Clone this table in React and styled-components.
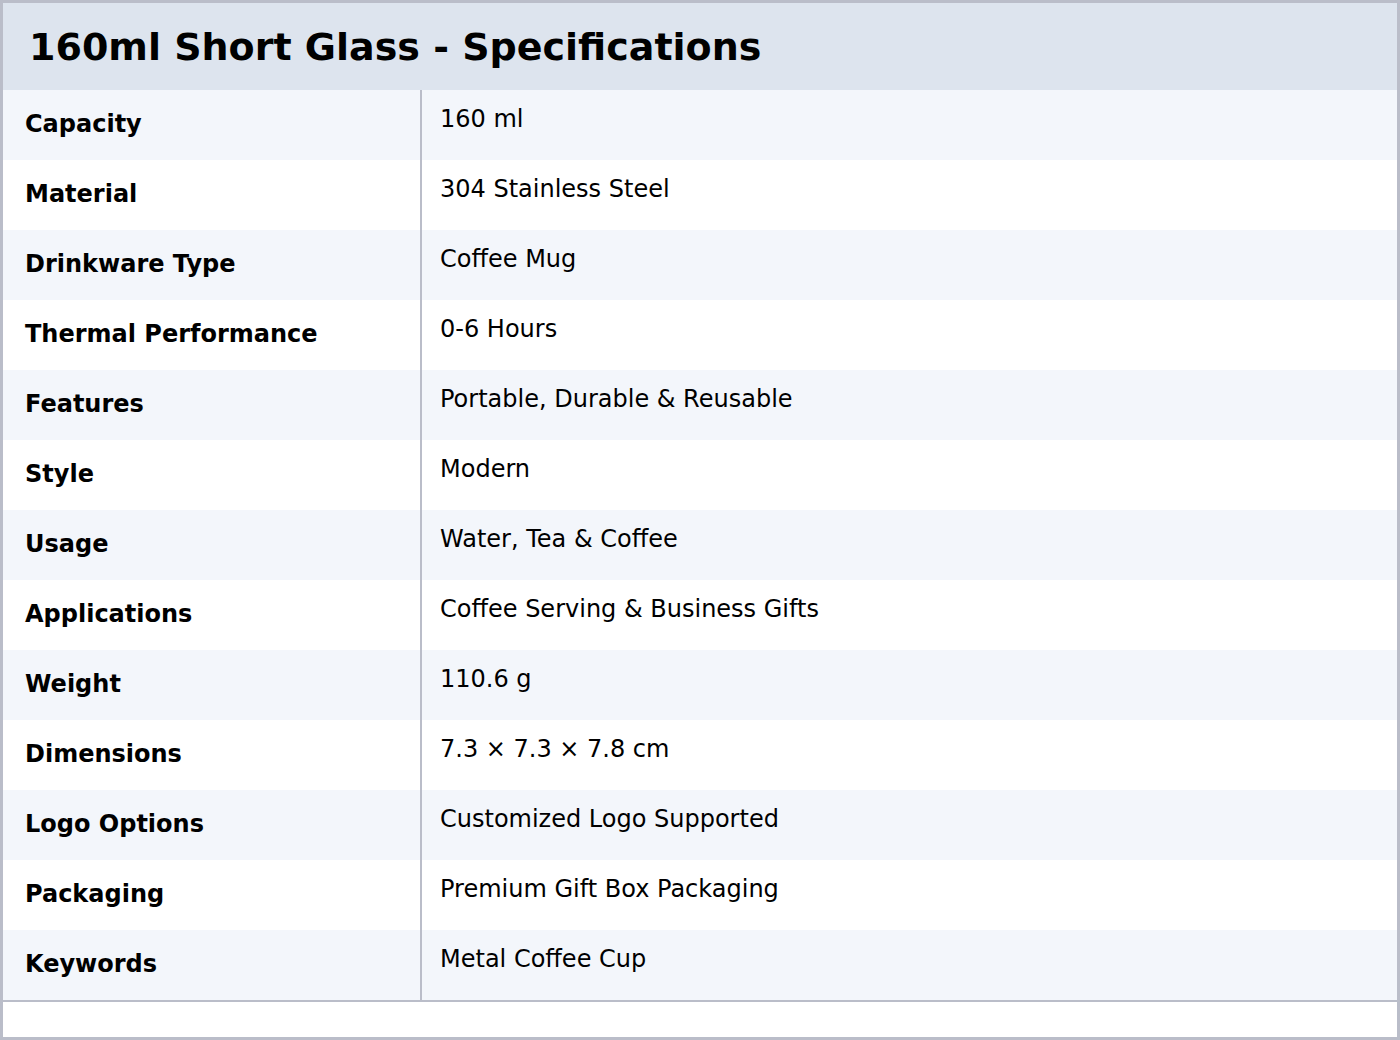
import React from "react";
import styled, { createGlobalStyle } from "styled-components";

const GlobalStyle = createGlobalStyle`
  html, body {
    margin: 0;
    padding: 0;
    background: #fff;
    font-family: "DejaVu Sans", "Liberation Sans", sans-serif;
  }
  * {
    box-sizing: border-box;
  }
`;

const specs = [
  ["Capacity", "160 ml"],
  ["Material", "304 Stainless Steel"],
  ["Drinkware Type", "Coffee Mug"],
  ["Thermal Performance", "0-6 Hours"],
  ["Features", "Portable, Durable & Reusable"],
  ["Style", "Modern"],
  ["Usage", "Water, Tea & Coffee"],
  ["Applications", "Coffee Serving & Business Gifts"],
  ["Weight", "110.6 g"],
  ["Dimensions", "7.3 × 7.3 × 7.8 cm"],
  ["Logo Options", "Customized Logo Supported"],
  ["Packaging", "Premium Gift Box Packaging"],
  ["Keywords", "Metal Coffee Cup"],
];

const App = () => {
  return (
    <>
      <GlobalStyle />
      <Sheet>
        <Header>
          <Title>160ml Short Glass - Specifications</Title>
        </Header>
        <Table>
          {specs.map(([label, value], i) => (
            <Row key={label} $striped={i % 2 === 0}>
              <Label>{label}</Label>
              <Value>{value}</Value>
            </Row>
          ))}
        </Table>
      </Sheet>
    </>
  );
};

const Sheet = styled.div`
  width: 1400px;
  height: 1040px;
  border: 3px solid #babdc9;
  background-color: #fff;
  display: flex;
  flex-direction: column;
`;

const Header = styled.div`
  height: 87px;
  background-color: #dde4ee;
  padding: 0 26px;
  display: flex;
  align-items: center;
`;

const Title = styled.h1`
  margin: 0;
  font-size: 38px;
  font-weight: bold;
  color: #000;
`;

const Table = styled.div`
  display: flex;
  flex-direction: column;
  border-bottom: 2px solid #babdc9;
`;

const Row = styled.div`
  height: 70px;
  display: grid;
  grid-template-columns: 419px 1fr;
  background-color: ${(p) => (p.$striped ? "#f3f6fb" : "#ffffff")};
`;

const Label = styled.div`
  padding: 0 22px 3px;
  display: flex;
  align-items: center;
  font-size: 24px;
  font-weight: bold;
  color: #000;
  border-right: 2px solid #babdc9;
`;

const Value = styled.div`
  padding: 15px 18px 0;
  font-size: 24px;
  color: #000;
`;

export default App;
